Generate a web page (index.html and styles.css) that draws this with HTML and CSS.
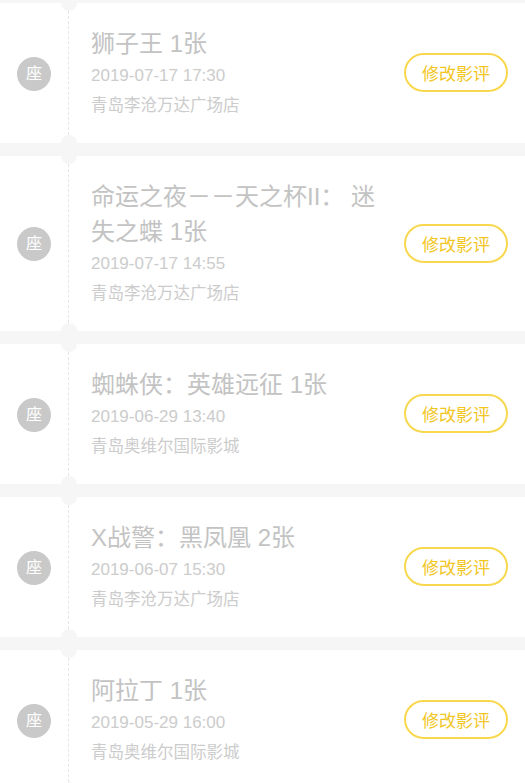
FILE: index.html
```html
<!DOCTYPE html>
<html lang="zh-CN">
<head>
<meta charset="utf-8">
<title>我的影票</title>
<link rel="stylesheet" href="styles.css">
</head>
<body>
<div class="list">
  <div class="ticket">
    <div class="stub"><span class="seat">座</span></div>
    <div class="body">
      <div class="info">
        <div class="title">狮子王 1张</div>
        <div class="date">2019-07-17 17:30</div>
        <div class="place">青岛李沧万达广场店</div>
      </div>
      <button class="btn">修改影评</button>
    </div>
  </div>
  <div class="ticket">
    <div class="stub"><span class="seat">座</span></div>
    <div class="body">
      <div class="info">
        <div class="title">命运之夜－－天之杯II： 迷失之蝶 1张</div>
        <div class="date">2019-07-17 14:55</div>
        <div class="place">青岛李沧万达广场店</div>
      </div>
      <button class="btn">修改影评</button>
    </div>
  </div>
  <div class="ticket">
    <div class="stub"><span class="seat">座</span></div>
    <div class="body">
      <div class="info">
        <div class="title">蜘蛛侠：英雄远征 1张</div>
        <div class="date">2019-06-29 13:40</div>
        <div class="place">青岛奥维尔国际影城</div>
      </div>
      <button class="btn">修改影评</button>
    </div>
  </div>
  <div class="ticket">
    <div class="stub"><span class="seat">座</span></div>
    <div class="body">
      <div class="info">
        <div class="title">X战警：黑凤凰 2张</div>
        <div class="date">2019-06-07 15:30</div>
        <div class="place">青岛李沧万达广场店</div>
      </div>
      <button class="btn">修改影评</button>
    </div>
  </div>
  <div class="ticket">
    <div class="stub"><span class="seat">座</span></div>
    <div class="body">
      <div class="info">
        <div class="title">阿拉丁 1张</div>
        <div class="date">2019-05-29 16:00</div>
        <div class="place">青岛奥维尔国际影城</div>
      </div>
      <button class="btn">修改影评</button>
    </div>
  </div>
</div>
</body>
</html>
```
FILE: styles.css
```css
html, body {
  margin: 0;
  padding: 0;
  background: #f6f6f6;
  font-family: "Liberation Sans", "Noto Sans CJK SC", sans-serif;
}
.list {
  display: flex;
  flex-direction: column;
  gap: 13px;
  padding-top: 3px;
}
.ticket {
  position: relative;
  display: flex;
  background: #fff;
  min-height: 140px;
}
.stub {
  width: 68px;
  flex: none;
  display: flex;
  align-items: center;
  justify-content: center;
  border-right: 1px dashed #e6e6e6;
  margin: 8px 0;
}
.ticket::before,
.ticket::after {
  content: "";
  position: absolute;
  left: 61px;
  width: 16px;
  height: 16px;
  border-radius: 50%;
  background: #f6f6f6;
}
.ticket::before { top: -8px; }
.ticket::after { bottom: -8px; }
.seat {
  width: 34px;
  height: 34px;
  border-radius: 50%;
  background: #c9c9c9;
  color: #fff;
  font-size: 16px;
  line-height: 34px;
  text-align: center;
  margin-top: 1px;
}
.body {
  flex: 1;
  display: flex;
  align-items: center;
  padding: 23px 17px 24px 22px;
}
.info {
  flex: 1;
  min-width: 0;
}
.title {
  font-size: 24px;
  line-height: 35px;
  color: #c3c3c3;
}
.date {
  font-size: 17px;
  line-height: 30px;
  color: #cccccc;
}
.place {
  font-size: 16.5px;
  line-height: 28px;
  color: #cccccc;
}
.btn {
  flex: none;
  margin-left: 20px;
  width: 104px;
  height: 39px;
  border: 2px solid #f8d84e;
  border-radius: 20px;
  background: #fff;
  color: #f2c61f;
  font-family: "Noto Sans CJK SC", sans-serif;
  font-size: 17px;
  padding: 0;
}
```
